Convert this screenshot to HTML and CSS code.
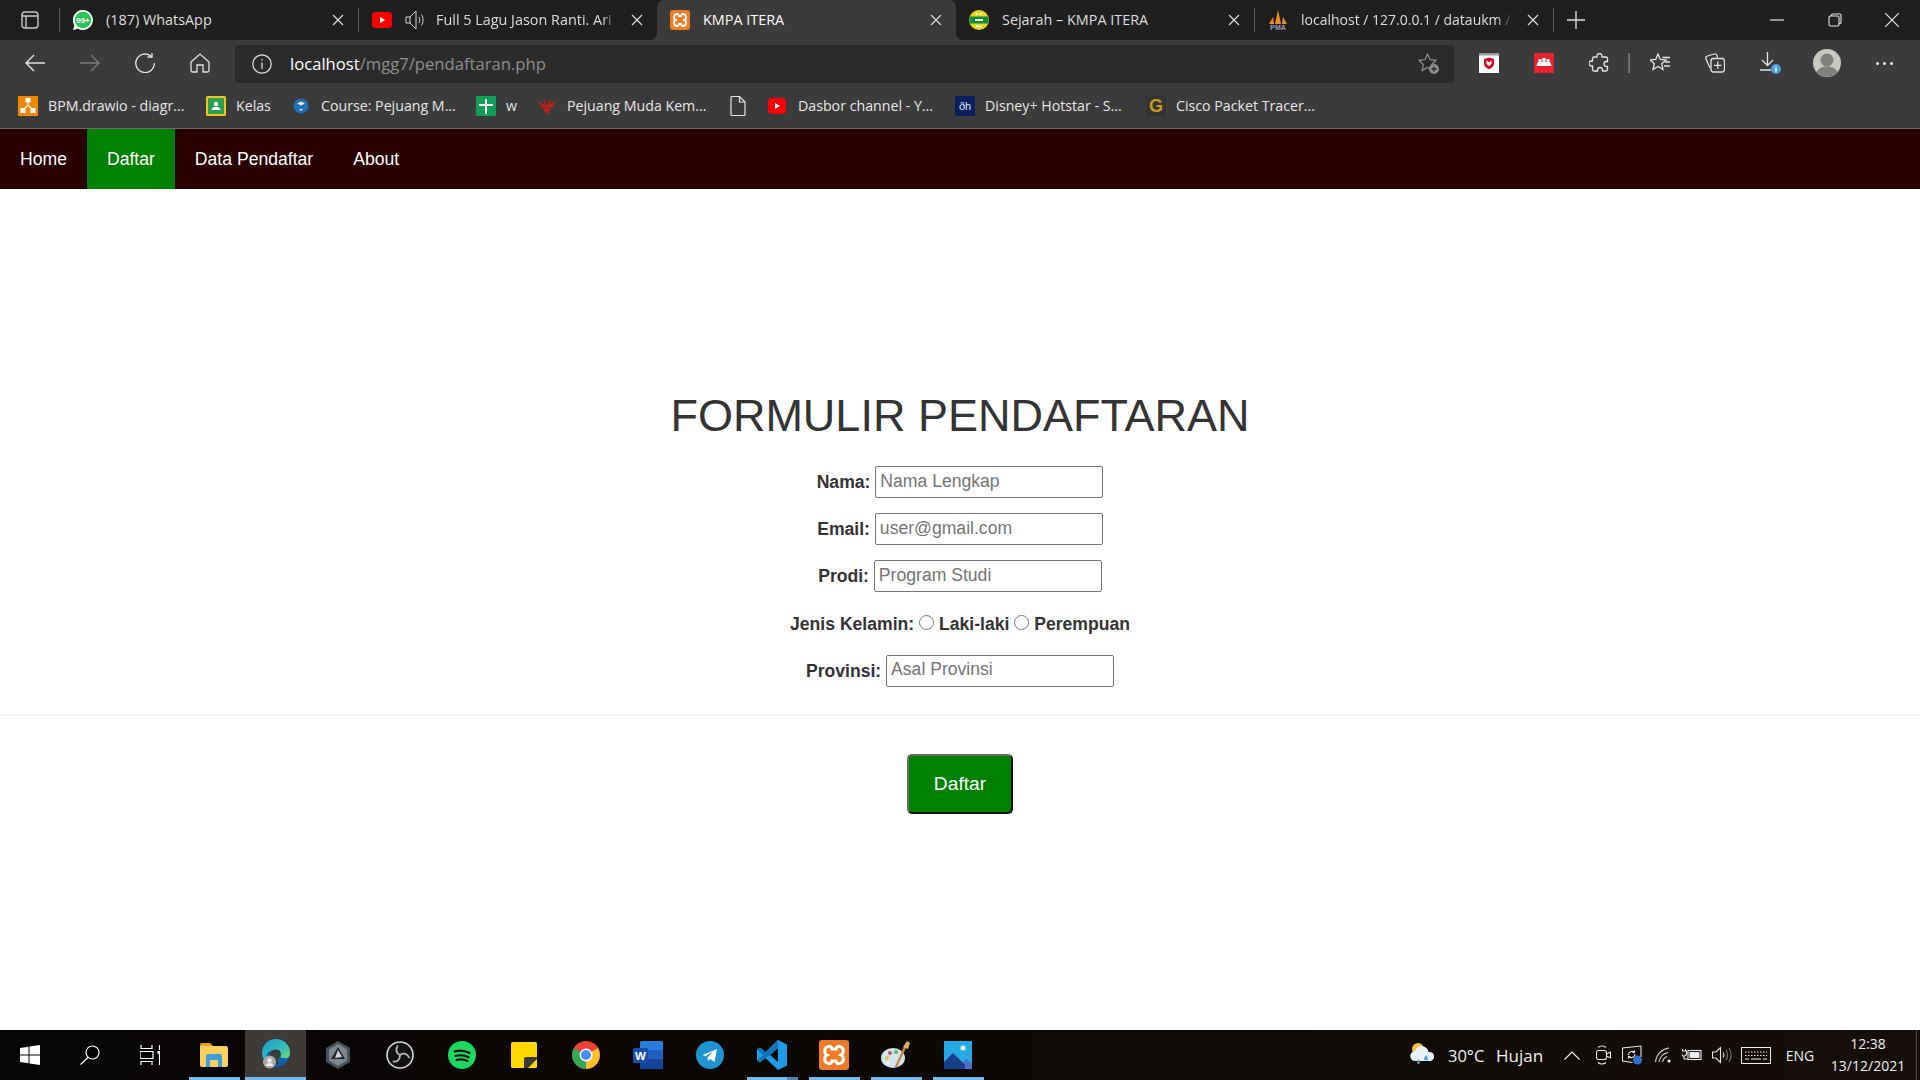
FILE: index.html
```html
<!DOCTYPE html>
<html lang="id">
<head>
<meta charset="utf-8">
<title>KMPA ITERA</title>
<link rel="stylesheet" href="styles.css">
</head>
<body>
<div class="screen">

<!-- tab strip -->
<div class="tabstrip">
	<div class="tab-panel">
		<svg width="18" height="18" viewBox="0 0 18 18" fill="none" stroke="#c8c8c8" stroke-width="1.4"><rect x="1" y="1" width="16" height="16" rx="3"/><path d="M1 5h16M5 5v12"/></svg>
	</div>
	<i class="tab-sep"></i>
	<div class="tab">
		<svg class="fav" viewBox="0 0 20 20"><path d="M10 0a10 10 0 1 1-5 18.7L0 20l1.4-4.7A10 10 0 0 1 10 0z" fill="#f4fff6"/><circle cx="10" cy="10" r="8.2" fill="#2cc356"/><text x="10" y="12.7" font-size="8" font-weight="700" text-anchor="middle" fill="#fff" font-family="Liberation Sans">99+</text></svg>
		<span class="tab-title">(187) WhatsApp</span>
		<svg class="tab-x" viewBox="0 0 12 12"><path d="M1 1l10 10M11 1L1 11"/></svg>
	</div>
	<i class="tab-sep"></i>
	<div class="tab">
		<svg class="fav" viewBox="0 0 20 20"><rect y="2" width="20" height="16" rx="4" fill="#f00"/><path d="M8 7l5 3-5 3z" fill="#fff"/></svg>
		<svg class="tab-sound" viewBox="0 0 20 20" fill="none" stroke="#d8d8d8" stroke-width="1"><path d="M1 7h4l6-6v18l-6-6H1zM5 7v6"/><path d="M14 7c1 2 1 4 0 6M16.5 4.5c2 3.500 2 7.500 0 11"/></svg>
		<span class="tab-title tab-title-sound tab-fade">Full 5 Lagu Jason Ranti. Ari</span>
		<svg class="tab-x" viewBox="0 0 12 12"><path d="M1 1l10 10M11 1L1 11"/></svg>
	</div>
	<div class="tab tab-on">
		<svg class="fav" viewBox="0 0 20 20"><rect width="20" height="20" rx="3" fill="#ef7a27"/><path d="M5.500 4.500c2-1 3.500 0 3.500 1.500h2c0-1.500 1.500-2.500 3.500-1.500s2 4.500 0 5.500c2 1 2 4.500 0 5.500s-3.500 0-3.500-1.500H9c0 1.500-1.500 2.500-3.500 1.500s-2-4.500 0-5.500c-2-1-2-4.500 0-5.500z" fill="#ef7a27" stroke="#fff" stroke-width="2"/></svg>
		<span class="tab-title">KMPA ITERA</span>
		<svg class="tab-x" viewBox="0 0 12 12"><path d="M1 1l10 10M11 1L1 11"/></svg>
	</div>
	<div class="tab">
		<svg class="fav" viewBox="0 0 20 20"><circle cx="10" cy="10" r="10" fill="#e6d81f"/><path d="M1 6.500h18a10 10 0 0 1 0 7H1a10 10 0 0 1 0-7z" fill="#0f8a35"/><path d="M6 9h8v2H6zM7 3h1.500v2H7zM11 3h1.500v2H11zM7 15.500h6V17H7z" fill="#fff"/></svg>
		<span class="tab-title">Sejarah – KMPA ITERA</span>
		<svg class="tab-x" viewBox="0 0 12 12"><path d="M1 1l10 10M11 1L1 11"/></svg>
	</div>
	<i class="tab-sep"></i>
	<div class="tab">
		<svg class="fav" viewBox="0 0 20 20"><path d="M1 14L5 7l1 7zM7 14L10 0l3 14zM14 14L15 7l4 7z" fill="#ee8f1f"/><text x="10" y="19.500" font-size="7" font-weight="700" text-anchor="middle" fill="#9a9ab8" font-family="Liberation Sans">PMA</text></svg>
		<span class="tab-title tab-title-pma tab-fade">localhost / 127.0.0.1 / dataukm /</span>
		<svg class="tab-x" viewBox="0 0 12 12"><path d="M1 1l10 10M11 1L1 11"/></svg>
	</div>
	<i class="tab-sep"></i>
	<div class="tab-new">
		<svg width="18" height="18" viewBox="0 0 18 18" stroke="#e0e0e0" stroke-width="1.300"><path d="M9 0v18M0 9h18"/></svg>
	</div>
	<div class="win-btns">
		<svg width="14" height="14" viewBox="0 0 14 14" stroke="#e8e8e8" stroke-width="1.200"><path d="M0 7h14"/></svg>
		<svg width="14" height="14" viewBox="0 0 14 14" fill="none" stroke="#e8e8e8" stroke-width="1.100"><rect x="1" y="3" width="10" height="10" rx="1.500"/><path d="M3.500 3V2a1 1 0 0 1 1-1H12a1 1 0 0 1 1 1v7.500a1 1 0 0 1-1 1h-1"/></svg>
		<svg width="14" height="14" viewBox="0 0 14 14" stroke="#e8e8e8" stroke-width="1.200"><path d="M0 0l14 14M14 0L0 14"/></svg>
	</div>
</div>

<!-- toolbar + address -->
<div class="toolbar">
	<div class="tb-btn"><svg width="20" height="20" viewBox="0 0 20 20" fill="none" stroke="#e4e4e4" stroke-width="1.400"><path d="M20 10H1M9 2l-8 8 8 8"/></svg></div>
	<div class="tb-btn"><svg width="20" height="20" viewBox="0 0 20 20" fill="none" stroke="#7d7d7d" stroke-width="1.400"><path d="M0 10h19M11 2l8 8-8 8"/></svg></div>
	<div class="tb-btn"><svg width="20" height="20" viewBox="0 0 20 20" fill="none" stroke="#e4e4e4" stroke-width="1.400"><path d="M16.500 3.500A9.300 9.300 0 1 0 19.400 10"/><path d="M17 0v4h-4.500"/></svg></div>
	<div class="tb-btn"><svg width="20" height="20" viewBox="0 0 20 20" fill="none" stroke="#e4e4e4" stroke-width="1.300"><path d="M1 9l9-8 9 8v8.500a1.500 1.500 0 0 1-1.500 1.500H13v-7H7v7H2.500A1.500 1.500 0 0 1 1 17.500z"/></svg></div>
	<div class="addr">
		<svg class="addr-info" width="20" height="20" viewBox="0 0 20 20" fill="none" stroke="#e4e4e4" stroke-width="1.200"><circle cx="10" cy="10" r="9.200"/><path d="M10 8.500v6.500M10 5v1.500"/></svg>
		<span class="addr-url"><b>localhost</b>/mgg7/pendaftaran.php</span>
		<svg class="addr-star" width="22" height="22" viewBox="0 0 22 22" fill="none" stroke="#8f8f8f" stroke-width="1.200"><path d="M9.500 1l2.600 5.600 6 .7-4.400 4.200 1.100 6-5.300-3-5.300 3 1.100-6L1 7.300l6-.7z"/><circle cx="16" cy="16" r="5" fill="#8f8f8f" stroke="none"/><path d="M16 13.500v5M13.500 16h5" stroke="#2b2b2b" stroke-width="1.300"/></svg>
	</div>
	<div class="tb-ext">
		<div class="tb-btn"><svg width="20" height="20" viewBox="0 0 20 20"><rect width="20" height="20" fill="#fff"/><rect width="20" height="2.500" fill="#9a9a9a"/><path d="M5 6l5-1.500L15 6v5c0 2.500-2.500 4-5 5.500C7.500 15 5 13.500 5 11z" fill="#c8102e"/><path d="M7.500 7.500l2.500 2 2.500-2v3.500L10 13l-2.500-2z" fill="#fff"/></svg></div>
		<div class="tb-btn"><svg width="20" height="20" viewBox="0 0 20 20"><rect width="20" height="20" fill="#e8202f"/><g fill="#fff"><circle cx="6" cy="7.500" r="1.800"/><circle cx="10" cy="6.500" r="1.800"/><circle cx="14" cy="7.500" r="1.800"/><path d="M2.500 13c.5-3 1.500-4.500 3.500-4.500s2 1.500 2 4.500zM6.500 13c.5-3 1.500-5 3.500-5s3 2 3.500 5zM12 13c0-3 0-4.500 2-4.500s3 1.500 3.500 4.500z"/></g></svg></div>
		<div class="tb-btn"><svg width="20" height="20" viewBox="0 0 20 20" fill="none" stroke="#e4e4e4" stroke-width="1.300"><path d="M8 3a2.500 2.500 0 0 1 5 0v1h4a1.500 1.500 0 0 1 1.500 1.500v3h-1a2.500 2.500 0 0 0 0 5h1v3A1.500 1.500 0 0 1 17 18h-3.500v-1a2.500 2.500 0 0 0-5 0v1H5a1.500 1.500 0 0 1-1.500-1.500V13h-1a2.500 2.500 0 0 1 0-5h1V5.500A1.500 1.500 0 0 1 5 4h3z"/></svg></div>
		<i class="tb-sep"></i>
		<div class="tb-btn"><svg width="20" height="20" viewBox="0 0 20 20" fill="none" stroke="#e4e4e4" stroke-width="1.300"><path d="M8 1l2.300 5.400 5.700.5-4.300 3.800 1.300 5.700L8 13.400l-5 3 1.300-5.700L0 6.900l5.700-.5z"/><path d="M12.500 4.500H20M15 9h5M14 13h6"/></svg></div>
		<div class="tb-btn"><svg width="20" height="20" viewBox="0 0 20 20" fill="none" stroke="#e4e4e4" stroke-width="1.300"><path d="M5 15L1 6c-.5-1.500 0-2.500 1.500-3L9 1c1.500-.5 2.500 0 3 1.500l.5 2"/><rect x="6" y="5.500" width="13.500" height="13.500" rx="2.500"/><path d="M12.800 8.500v7.500M9 12.300h7.500"/></svg></div>
		<div class="tb-btn tb-down"><svg width="22" height="22" viewBox="0 0 22 22" fill="none" stroke="#e4e4e4" stroke-width="1.300"><path d="M7.500 0v13M2 8l5.500 5.500L13 8M0 18h11"/><circle cx="16" cy="17" r="5" fill="#4d9fe0" stroke="none"/><path d="M16 16v3.500M16 14.200v1" stroke="#fff" stroke-width="1.500"/></svg></div>
		<div class="tb-avatar"><svg width="28" height="28" viewBox="0 0 28 28"><circle cx="14" cy="14" r="14" fill="#c9c9c4"/><circle cx="14" cy="11" r="6.500" fill="#7f7f7b"/><path d="M3.500 23c2-4 6-5.500 10.500-5.500S22.500 19 24.500 23a14 14 0 0 1-21 0z" fill="#7f7f7b"/></svg></div>
		<div class="tb-dots"><i></i><i></i><i></i></div>
	</div>
</div>

<!-- bookmarks -->
<div class="bookmarks">
	<div class="bm"><svg viewBox="0 0 20 20"><rect width="20" height="20" fill="#f08705"/><path d="M10 4v5M5 14l5-5 5 5" stroke="#fff" stroke-width="1.200" fill="none"/><path d="M7.500 2h5v4.500h-5zM2.500 12h5v5h-5zM12.500 12h5v5h-5z" fill="#fff"/></svg><span>BPM.drawio - diagr...</span></div>
	<div class="bm"><svg viewBox="0 0 20 20"><rect width="20" height="20" rx="1.500" fill="#f4c21b"/><rect x="2" y="2" width="16" height="16" fill="#2a9d55"/><circle cx="10" cy="8" r="2.300" fill="#fff"/><path d="M5.500 14c.5-2.500 2-3 4.500-3s4 .5 4.500 3z" fill="#fff"/></svg><span>Kelas</span></div>
	<div class="bm"><svg viewBox="0 0 20 20"><circle cx="10" cy="10" r="7.500" fill="#1c6fb4"/><path d="M6 7.500l4-2 4 2-4 2z" fill="#f0e9d0"/><path d="M6.500 11c1.500 3 5.500 3 7 0l-3.500 4z" fill="#fff"/></svg><span>Course: Pejuang M...</span></div>
	<div class="bm"><svg viewBox="0 0 20 20"><rect width="20" height="20" rx="1" fill="#0f9d58"/><path d="M9 3h2v5h6v2h-6v8H9v-8H3V8h6z" fill="#fff"/></svg><span>w</span></div>
	<div class="bm"><svg viewBox="0 0 20 20" fill="none" stroke="#cf1a1a" stroke-width="1.500"><path d="M10 17L4 8M10 17l6-9M10 14L7 4M10 14l3-10M9 11L2 6M11 11l7-5M8 14l3 0"/></svg><span>Pejuang Muda Kem...</span></div>
	<div class="bm"><svg viewBox="0 0 20 20" fill="none" stroke="#e4e4e4" stroke-width="1.200"><path d="M3 1.500a1 1 0 0 1 1-1h7.500L17 6v12.500a1 1 0 0 1-1 1H4a1 1 0 0 1-1-1zM11.500.5V6H17"/></svg></div>
	<div class="bm"><svg viewBox="0 0 20 20"><rect y="2" width="18" height="16" rx="4" fill="#f00"/><path d="M7 7l5 3-5 3z" fill="#fff"/></svg><span>Dasbor channel - Y...</span></div>
	<div class="bm"><svg viewBox="0 0 20 20"><rect width="20" height="20" fill="#0c1f5c"/><text x="10" y="14" font-size="11" text-anchor="middle" fill="#dfe6ff" font-family="Liberation Sans">ðh</text></svg><span>Disney+ Hotstar - S...</span></div>
	<div class="bm"><svg viewBox="0 0 20 20"><rect width="20" height="20" rx="2" fill="#333"/><text x="10" y="16" font-size="18" font-weight="700" text-anchor="middle" fill="#c99a1f" font-family="Liberation Sans">G</text></svg><span>Cisco Packet Tracer...</span></div>
</div>

<!-- the page itself -->
<nav class="navbar">
	<a href="#">Home</a>
	<a href="#" class="active">Daftar</a>
	<a href="#">Data Pendaftar</a>
	<a href="#">About</a>
</nav>

<main class="page">
	<h1>FORMULIR PENDAFTARAN</h1>
	<form class="daftar-form">
		<div class="row"><label for="nama">Nama:</label> <input type="text" id="nama" placeholder="Nama Lengkap"></div>
		<div class="row"><label for="email">Email:</label> <input type="text" id="email" placeholder="user@gmail.com"></div>
		<div class="row"><label for="prodi">Prodi:</label> <input type="text" id="prodi" placeholder="Program Studi"></div>
		<div class="row"><label>Jenis Kelamin: <input type="radio" name="jk"> Laki-laki <input type="radio" name="jk"> Perempuan</label></div>
		<div class="row"><label for="prov">Provinsi:</label> <input type="text" id="prov" placeholder="Asal Provinsi"></div>
		<hr>
		<button type="button" class="btn-daftar">Daftar</button>
	</form>
</main>

<!-- windows taskbar -->
<div class="taskbar">
	<div class="apps">
		<div class="app"><svg width="20" height="20" viewBox="0 0 20 20" fill="#fff"><path d="M0 3l8.500-1.300V9.500H0zM9.500 1.500L20 0v9.500H9.500zM0 10.500h8.500v7.800L0 17zM9.500 10.500H20V20L9.500 18.500z"/></svg></div>
		<div class="app"><svg width="20" height="20" viewBox="0 0 20 20" fill="none" stroke="#fff" stroke-width="1.200"><circle cx="12.500" cy="7.500" r="6.500"/><path d="M8 12.500L.5 19.500"/></svg></div>
		<div class="app app-taskview"><svg width="20" height="20" viewBox="0 0 20 20" fill="none" stroke="#fff" stroke-width="1.200"><path d="M0 6.500h13v7H0zM1 0v3.500h11V0M1 20v-3.500h11V20M19.500 0v5M19.500 9v11"/><rect x="17.500" y="6" width="3" height="3" fill="#fff" stroke="none"/></svg></div>
		<div class="app app-open"><svg width="28" height="24" viewBox="0 0 28 24"><path d="M0 2a2 2 0 0 1 2-2h8l3 3h-13z" fill="#e0a21c"/><path d="M0 3h26a2 2 0 0 1 2 2v17a2 2 0 0 1-2 2H2a2 2 0 0 1-2-2z" fill="#fbd15c"/><path d="M6 24V13a2 2 0 0 1 2-2h12a2 2 0 0 1 2 2v11h-4v-7h-8v7z" fill="#3f9ae0"/></svg></div>
		<div class="app app-active"><svg width="30" height="30" viewBox="0 0 30 30"><defs><linearGradient id="edgeg" x1="0" y1="0" x2="1" y2="1"><stop offset="0" stop-color="#1597d6"/><stop offset=".6" stop-color="#35c1b1"/><stop offset="1" stop-color="#7fdc5a"/></linearGradient></defs><circle cx="15" cy="14" r="14" fill="#0e5ea8"/><path d="M1 14a14 14 0 0 1 28 0c0 5-4 6-8 5-1.500-.4-2-2-1-3-1-4-5-6-8-5-5 1-8 5-7 10-3-1-4-4-4-7z" fill="url(#edgeg)"/><path d="M8 21c-1-6 3-11 8-10.500 2.500.3 4 2 4 5.500-3 3-4 6-2 9-5 1-9-1-10-4z" fill="#3d3a38"/><circle cx="8.500" cy="23" r="6.500" fill="#a8a8a8"/><circle cx="8.500" cy="21.500" r="2.300" fill="#eee"/><path d="M4.500 27c.5-2 2-3 4-3s3.500 1 4 3z" fill="#eee"/></svg></div>
		<div class="app"><svg width="26" height="28" viewBox="0 0 26 28"><path d="M13 0l12 7v14l-12 7-12-7V7z" fill="#4a5058"/><path d="M13 3l9 5.500v11L13 25l-9-5.500v-11z" fill="#7d858d"/><path d="M13 6l7 12H6z" fill="#22262b"/><path d="M13 9l4 7-7 1z" fill="#cfd3d7"/></svg></div>
		<div class="app"><svg width="28" height="28" viewBox="0 0 28 28" fill="none"><circle cx="14" cy="14" r="13" stroke="#d8d8d8" stroke-width="1.600" fill="#111"/><g stroke="#b8b8b8" stroke-width="1.800"><path d="M14 14C10 12 9 8 12 4.500"/><path d="M14 14C10 12 9 8 12 4.500" transform="rotate(120 14 14)"/><path d="M14 14C10 12 9 8 12 4.500" transform="rotate(240 14 14)"/></g></svg></div>
		<div class="app"><svg width="28" height="28" viewBox="0 0 28 28"><circle cx="14" cy="14" r="14" fill="#1ed760"/><path d="M6.500 10.500c5-1.500 10.500-1 15 1.500M7.500 15c4.500-1.200 9-.8 13 1.300M8.500 19c3.700-1 7.500-.7 11 1" fill="none" stroke="#111" stroke-width="2.100" stroke-linecap="round"/></svg></div>
		<div class="app"><svg width="26" height="26" viewBox="0 0 26 26"><rect width="26" height="26" rx="1.500" fill="#ffd800"/><path d="M13 26V17a2 2 0 0 1 2-2h11v2l-9 9z" fill="#3a3a38"/></svg></div>
		<div class="app"><svg width="28" height="28" viewBox="0 0 28 28"><circle cx="14" cy="14" r="14" fill="#ea4335"/><path d="M14 14L26 7a14 14 0 0 1-12 21z" fill="#fbc02d"/><path d="M14 14L14 28A14 14 0 0 1 2 7z" fill="#34a853"/><circle cx="14" cy="14" r="6.500" fill="#fff"/><circle cx="14" cy="14" r="5" fill="#4a8bf5"/></svg></div>
		<div class="app"><svg width="30" height="28" viewBox="0 0 30 28"><rect x="7" y="0" width="23" height="28" rx="1.500" fill="#2a7de0"/><path d="M7 9h23v9H7z" fill="#1d5fc0"/><path d="M7 18h23v8.500a1.500 1.500 0 0 1-1.500 1.500h-20A1.500 1.500 0 0 1 7 26.500z" fill="#14449a"/><rect y="7" width="15" height="15" rx="1.500" fill="#1a50ad"/><text x="7.500" y="18.500" font-size="11.500" font-weight="700" text-anchor="middle" fill="#fff" font-family="Liberation Sans">W</text></svg></div>
		<div class="app"><svg width="28" height="28" viewBox="0 0 28 28"><circle cx="14" cy="14" r="14" fill="#1d93d2"/><path d="M6.500 14L21 8l-2.500 13-4.500-3-2 2.300-.5-4 6-6-8 5z" fill="#fff"/></svg></div>
		<div class="app app-open app-group"><svg width="30" height="30" viewBox="0 0 30 30"><path d="M21 0l9 4.500v21L21 30 8.500 18 3 22.500 0 20.500v-11L3 7.500 8.500 12z" fill="#1f9ce6"/><path d="M21 8l-8 7 8 7z" fill="#0d0a08"/><path d="M21 0L8.500 12 3 7.500 0 9.500l6 5.500L0 20.500l3 2L21 8z" fill="#0f73bb"/></svg></div>
		<div class="app app-open"><svg width="30" height="30" viewBox="0 0 30 30"><rect width="30" height="30" rx="3" fill="#ef7a27"/><path d="M8 7c3-1.500 5 0 5 2h4c0-2 2-3.500 5-2s3 6.500 0 8c3 1.500 3 6.500 0 8s-5 0-5-2h-4c0 2-2 3.500-5 2s-3-6.500 0-8c-3-1.500-3-6.500 0-8z" fill="#ef7a27" stroke="#fff" stroke-width="3"/></svg></div>
		<div class="app app-open"><svg width="30" height="30" viewBox="0 0 30 30"><ellipse cx="12" cy="18" rx="12" ry="10" fill="#cfe3f2"/><circle cx="6" cy="18" r="2" fill="#e8c53a"/><circle cx="9" cy="13" r="2" fill="#d9534f"/><circle cx="15" cy="12" r="2" fill="#5bb85c"/><circle cx="7" cy="23" r="2" fill="#eee"/><path d="M15 27L24 7" stroke="#c98a3e" stroke-width="2.500"/><path d="M22 7l4-6 3 2-2 6z" fill="#e0b070"/></svg></div>
		<div class="app app-open"><svg width="28" height="28" viewBox="0 0 28 28"><rect width="28" height="28" rx="1" fill="#27a9e6"/><circle cx="19" cy="7" r="2.500" fill="#fff"/><path d="M0 26l10-13 8 8 5-3 5 5v5H0z" fill="#4f6fc9"/><path d="M0 21l9-9 12 12v4H0z" fill="#143f86"/></svg></div>
	</div>
	<div class="tray">
		<svg class="tray-weather" width="26" height="26" viewBox="0 0 26 26"><circle cx="8" cy="7" r="6" fill="#f6c244"/><path d="M5.500 19a5 5 0 0 1-.5-10 7 7 0 0 1 13.500 1A4.500 4.500 0 0 1 20.500 19z" fill="#e9f3fb"/><path d="M8.500 17l-1.500 3.500a1.500 1.500 0 0 0 3 0zM16 13l-2 3.500a2 2 0 0 0 4 0z" fill="#4c9be0"/></svg>
		<span class="tray-txt">30°C</span>
		<span class="tray-txt tray-hujan">Hujan</span>
		<svg width="16" height="9" viewBox="0 0 16 9" fill="none" stroke="#eee" stroke-width="1.200"><path d="M0.500 8.500L8 1l7.500 7.500"/></svg>
		<svg width="15" height="20" viewBox="0 0 15 20" fill="none" stroke="#e8e8e8" stroke-width="1.100"><rect x="0.500" y="5.500" width="10" height="9" rx="2"/><path d="M10.500 9l4-2v6l-4-2M2 2.500c2-2 6-2 8 0M2 17.500c2 2 6 2 8 0"/></svg>
		<svg width="20" height="20" viewBox="0 0 20 20" fill="none" stroke="#e8e8e8" stroke-width="1.100"><path d="M19 1L.5 3v13l10 1.500"/><path d="M19 1v11M6.500 10a3.500 3.500 0 0 1 6-2.500M13 9a3.500 3.500 0 0 1-6 2.500M12.500 5.500v2h-2M6.500 13.500v-2h2"/><circle cx="15.500" cy="15" r="4.500" fill="#2e74c8" stroke="none"/></svg>
		<svg width="16" height="16" viewBox="0 0 16 16" fill="none" stroke="#d8d8d8" stroke-width="1.100"><path d="M.5 15C1.500 7 7 2 14 1M4 15c.8-5 4.500-8.500 9-9.500M7.500 15c.5-2.500 2-4.500 4.500-5.500"/><circle cx="14" cy="14" r="1.500" fill="#fff" stroke="none"/></svg>
		<svg width="20" height="14" viewBox="0 0 20 14" fill="none" stroke="#eee" stroke-width="1.100"><rect x="6" y="2.500" width="13" height="9"/><rect x="7.500" y="4" width="10" height="6" fill="#eee" stroke="none"/><path d="M3.500 1v2M.5 1v2M-.5 3h5v2.500a2 2 0 0 1-5 0zM2 7.500V11h4"/></svg>
		<svg width="20" height="18" viewBox="0 0 20 18" fill="none" stroke="#e8e8e8" stroke-width="1.100"><path d="M.5 6H4l4.500-4.500v15L4 12H.5zM11 6.500c1 1.500 1 3.500 0 5"/><path d="M14 4c1.800 3 1.800 7 0 10M17 2c2.700 4.500 2.700 9.500 0 14" stroke="#777"/></svg>
		<svg width="30" height="17" viewBox="0 0 30 17" fill="none" stroke="#eee" stroke-width="1"><rect x=".5" y=".5" width="29" height="16"/><path d="M4 5h22M4 8.500h22" stroke-dasharray="1.500 1.500"/><path d="M4 12h4M10 12h10M22 12h4"/></svg>
		<span class="tray-eng">ENG</span>
		<div class="clock"><span>12:38</span><span>13/12/2021</span></div>
		<i class="show-desktop"></i>
	</div>
</div>

</div>
</body>
</html>
```

FILE: styles.css
```css
* {
	box-sizing: border-box;
}

body {
	margin: 0;
	font-family: "Liberation Sans", Arial, sans-serif;
	background: #fff;
}

.screen {
	width: 1920px;
	height: 1080px;
	display: flex;
	flex-direction: column;
	overflow: hidden;
}

/* tab strip */
.tabstrip {
	height: 40px;
	display: flex;
	align-items: stretch;
	background: #1f1f1f;
	font-family: "Open Sans", sans-serif;
	font-size: 14.400px;
	color: #dedede;
}

.tab-panel {
	width: 59px;
	display: flex;
	align-items: center;
	padding-left: 21px;
}

.tab-sep {
	width: 1px;
	height: 24px;
	margin-top: 8px;
	background: #5a5a5a;
}

.tab {
	width: 298px;
	display: flex;
	align-items: center;
	padding: 0 14px 0 13px;
	position: relative;
	white-space: nowrap;
}

.tab-on {
	width: 299px;
	background: #3b3b3b;
	border-radius: 7px 7px 0 0;
	color: #fff;
}

.tab-on::before,
.tab-on::after {
	content: "";
	position: absolute;
	bottom: 0;
	width: 8px;
	height: 8px;
}

.tab-on::before {
	left: -8px;
	background: radial-gradient(circle at 0 0, transparent 8px, #3b3b3b 8.5px);
}

.tab-on::after {
	right: -8px;
	background: radial-gradient(circle at 100% 0, transparent 8px, #3b3b3b 8.5px);
}

.fav {
	width: 20px;
	height: 20px;
	flex: none;
}

.tab-sound {
	width: 20px;
	height: 20px;
	flex: none;
	margin-left: 13px;
}

.tab-title {
	flex: 1;
	margin-left: 13px;
	padding-bottom: 2px;
	overflow: hidden;
}

.tab-title-sound {
	margin-left: 11px;
}

.tab-title-pma {
	font-size: 14px;
}

.tab-fade {
	-webkit-mask-image: linear-gradient(90deg, #000 92%, transparent 100%);
	mask-image: linear-gradient(90deg, #000 92%, transparent 100%);
}

.tab-x {
	width: 12px;
	height: 12px;
	flex: none;
	margin-left: 14px;
	fill: none;
	stroke: #dedede;
	stroke-width: 1.2;
}

.tab-new {
	width: 44px;
	display: flex;
	align-items: center;
	justify-content: center;
}

.win-btns {
	margin-left: auto;
	width: 150px;
	padding-right: 21px;
	display: flex;
	align-items: center;
	justify-content: space-between;
}

/* toolbar */
.toolbar {
	height: 49px;
	display: flex;
	align-items: flex-start;
	padding-left: 7px;
	background: #3b3b3b;
}

.tb-btn {
	width: 55px;
	height: 46px;
	flex: none;
	display: flex;
	align-items: center;
	justify-content: center;
}

.tb-down svg {
	margin-left: 3px;
}

.addr {
	width: 1219px;
	height: 38px;
	margin: 5px 0 0 8px;
	display: flex;
	align-items: center;
	padding: 0 13px 0 17px;
	background: #2b2b2b;
	border-radius: 4px;
	flex: none;
}

.addr-url {
	margin-left: 18px;
	padding-bottom: 2px;
	font-family: "Open Sans", sans-serif;
	font-size: 16.640px;
	color: #8f8f8f;
}

.addr-url b {
	font-weight: 400;
	color: #fff;
}

.addr-star {
	margin-left: auto;
	margin-right: 1px;
}

.tb-ext {
	display: flex;
	align-items: center;
	height: 46px;
	margin-left: 7px;
}

.tb-sep {
	width: 2px;
	height: 20px;
	margin: 0 2px 0 2px;
	background: #6e6e6e;
}

.tb-avatar {
	width: 60px;
	display: flex;
	justify-content: center;
}

.tb-dots {
	width: 55px;
	display: flex;
	justify-content: center;
	gap: 4px;
}

.tb-dots i {
	width: 3px;
	height: 3px;
	border-radius: 50%;
	background: #eee;
}

/* bookmarks */
.bookmarks {
	height: 40px;
	display: grid;
	grid-template-columns: 188px 85px 185px 61px 191px 40px 187px 191px auto;
	align-items: center;
	padding: 0 0 5px 18px;
	background: #3b3b3b;
	border-bottom: 1px solid #6a6a6a;
	font-family: "Open Sans", sans-serif;
	font-size: 14.200px;
	color: #e8e8e8;
	white-space: nowrap;
}

.bm {
	display: flex;
	align-items: center;
	gap: 10px;
}

.bm svg {
	width: 20px;
	height: 20px;
	flex: none;
}

.bm span {
	padding-bottom: 2px;
}

/* site nav */
.navbar {
	height: 60px;
	display: flex;
	background: #280000;
}

.navbar a {
	padding: 0 20px;
	line-height: 60px;
	font-size: 17.600px;
	color: #fff;
	text-decoration: none;
}

.navbar a.active {
	background: #008000;
}

/* form */
.page {
	flex: 1;
	padding-top: 201px;
	text-align: center;
	color: #333;
}

.page h1 {
	margin: 0 0 24px;
	font-size: 45px;
	font-weight: 400;
	line-height: 52px;
}

.row {
	height: 32px;
	line-height: 32px;
	margin-bottom: 15.200px;
	font-size: 17.600px;
}

.row label {
	font-weight: 700;
}

.row input[type="text"] {
	width: 228px;
	height: 32px;
	padding: 0 4px 2px;
	border: 1px solid #767676;
	border-radius: 2px;
	font-family: inherit;
	font-size: 17.600px;
	vertical-align: top;
}

.row input::placeholder {
	color: #757575;
}

.row input[type="radio"] {
	width: 15px;
	height: 15px;
	margin: 0;
}

.daftar-form hr {
	height: 1px;
	margin: 28px 0 38px;
	border: 0;
	background: #eee;
}

.btn-daftar {
	width: 106px;
	height: 60px;
	border: 2px solid;
	border-color: #6b6b6b #111 #111 #6b6b6b;
	border-radius: 5px;
	background: #008000;
	color: #fff;
	font-family: inherit;
	font-size: 19.200px;
}

/* taskbar */
.taskbar {
	height: 50px;
	flex: none;
	display: flex;
	justify-content: space-between;
	background: linear-gradient(90deg, #070504, #0c0806 50%, #150e0b);
}

.apps {
	display: grid;
	grid-template-columns: 60px 60px 63px repeat(13, 62px);
}

.app {
	display: flex;
	align-items: center;
	justify-content: center;
	position: relative;
}

.app-taskview {
	margin-right: 3px;
}

.app-open::after {
	content: "";
	position: absolute;
	left: 6px;
	right: 5px;
	bottom: 0;
	height: 3px;
	background: #76b9ed;
}

.app-group::after {
	background: linear-gradient(90deg, #76b9ed 78%, #4f86b3 78%);
}

.app-active {
	background: #3d3a38;
	border-bottom: 3px solid #76b9ed;
	margin-right: 1px;
}

.tray {
	display: grid;
	grid-template-columns: 38px 48px 56px 40px 22px 36px 26px 32px 28px 40px 48px 88px 8px;
	align-items: center;
	justify-items: center;
	font-family: "Open Sans", sans-serif;
	color: #f0f0f0;
}

.tray-weather {
	justify-self: start;
}

.tray-txt {
	font-size: 16.500px;
	justify-self: start;
}

.tray-hujan {
	font-size: 17px;
}

.tray-eng {
	font-size: 14px;
}

.clock {
	display: flex;
	flex-direction: column;
	align-items: center;
	gap: 2px;
	font-size: 14px;
	line-height: 20px;
}

.show-desktop {
	width: 1px;
	height: 50px;
	background: #4a4a4a;
	margin-left: 0;
}
```
